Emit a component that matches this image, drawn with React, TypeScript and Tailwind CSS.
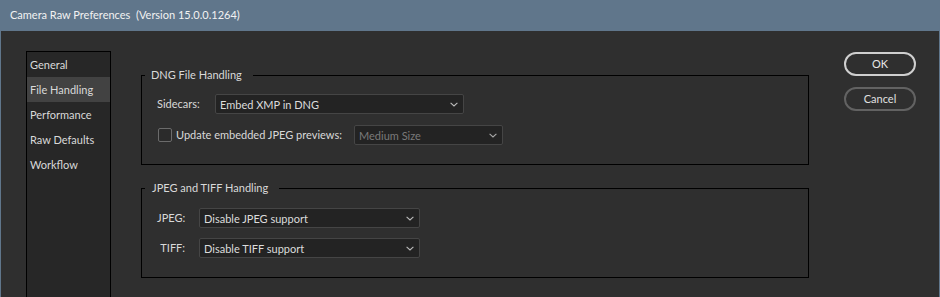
import React from "react";

const font = { fontFamily: 'Lato, "Noto Sans", sans-serif' };

function Chevron({ color = "#b4b4b4" }: { color?: string }) {
  return (
    <svg width="8" height="5" viewBox="0 0 8 5" className="shrink-0">
      <path d="M0.6 0.8 L4 4 L7.4 0.8" fill="none" stroke={color} strokeWidth="1.1" />
    </svg>
  );
}

function Select({ text, w, disabled = false }: { text: string; w: string; disabled?: boolean }) {
  return (
    <div
      className={`${w} h-[20px] rounded-[2px] border border-[#454545] bg-[#232323] flex items-center justify-between pl-[4px] pr-[5px] whitespace-nowrap ${
        disabled ? "text-[#7a7a7a]" : "text-[#dcdcdc]"
      }`}
    >
      <span className="leading-none">{text}</span>
      <Chevron color={disabled ? "#a8a8a8" : "#bcbcbc"} />
    </div>
  );
}

export default function App() {
  const items = ["General", "File Handling", "Performance", "Raw Defaults", "Workflow"];
  return (
    <div
      className="w-[940px] h-[297px] bg-[#2f2f2f] border-l border-r border-[#60768b] flex flex-col overflow-hidden text-[11px] text-[#d9d9d9] whitespace-nowrap"
      style={font}
    >
      <div className="h-[31px] shrink-0 bg-[#60768b] flex items-center pl-[9px] text-[11px] text-[#f2f2f2] whitespace-pre">
        {"Camera Raw Preferences  (Version 15.0.0.1264)"}
      </div>
      <div className="flex flex-1 pl-[25px] pt-[20px]">
        <div className="w-[85px] shrink-0 border border-b-0 border-black bg-[#272727] flex flex-col">
          {items.map((it) => (
            <div
              key={it}
              className={`h-[25px] flex items-center pl-[3px] pt-[2px] ${
                it === "File Handling" ? "bg-[#424242]" : ""
              }`}
            >
              {it}
            </div>
          ))}
        </div>
        <div className="ml-[30px] w-[668px] shrink-0 flex flex-col pt-[15px]">
          <fieldset className="border border-black pb-[19px]">
            <legend className="ml-[3px] pl-[6px] pr-[11px] leading-[18px]">DNG File Handling</legend>
            <div className="flex items-center pl-[15px] mt-[10px]">
              <span className="w-[58px] pt-[1px]">Sidecars:</span>
              <Select text="Embed XMP in DNG" w="w-[249px]" />
            </div>
            <div className="flex items-center pl-[16px] mt-[11px]">
              <div className="w-[14px] h-[14px] rounded-[2px] border border-[#6b6b6b] bg-[#2b2b2b]" />
              <span className="ml-[4px] w-[178px] pt-[1px]">Update embedded JPEG previews:</span>
              <Select text="Medium Size" w="w-[149px]" disabled />
            </div>
          </fieldset>
          <fieldset className="border border-black pb-[19px] mt-[14px]">
            <legend className="ml-[3px] pl-[7px] pr-[11px] leading-[18px]">JPEG and TIFF Handling</legend>
            <div className="flex items-center pl-[15px] mt-[11px]">
              <span className="w-[28px] text-right pt-[1px]">JPEG:</span>
              <div className="ml-[14px]">
                <Select text="Disable JPEG support" w="w-[221px]" />
              </div>
            </div>
            <div className="flex items-center pl-[15px] mt-[10px]">
              <span className="w-[28px] text-right pt-[1px]">TIFF:</span>
              <div className="ml-[14px]">
                <Select text="Disable TIFF support" w="w-[221px]" />
              </div>
            </div>
          </fieldset>
        </div>
        <div className="ml-[35px] w-[72px] shrink-0 flex flex-col gap-[11px] pt-[1px]">
          <button className="h-[24px] rounded-full border-2 border-[#cfcfcf] text-[#e6e6e6] flex items-center justify-center">
            OK
          </button>
          <button className="h-[24px] rounded-full border-2 border-[#626262] text-[#e0e0e0] flex items-center justify-center">
            Cancel
          </button>
        </div>
      </div>
    </div>
  );
}
